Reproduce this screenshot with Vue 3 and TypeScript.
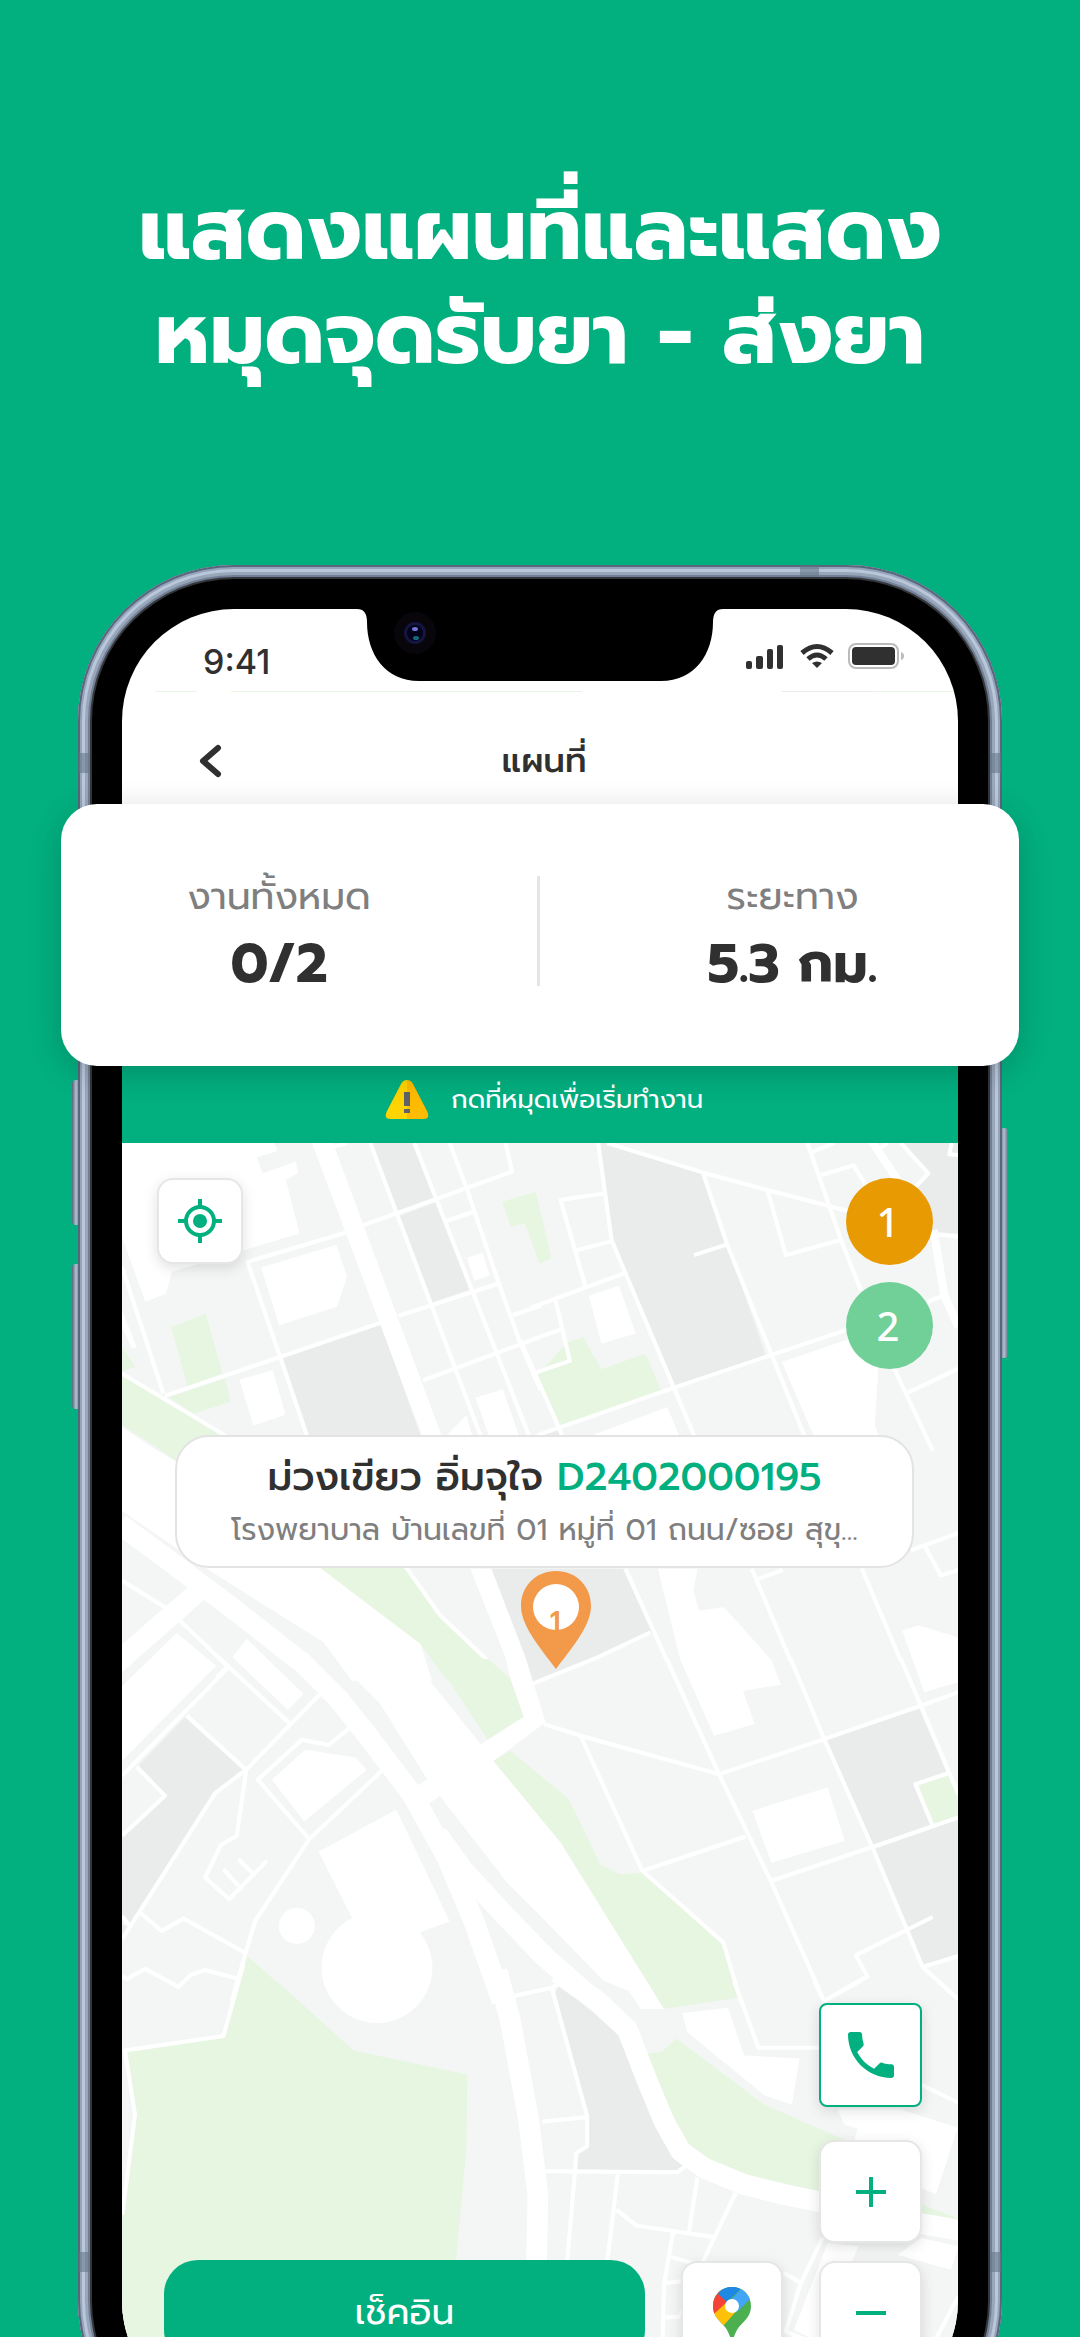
<script setup lang="ts">
interface Tile {
  x: number
  y: number
  dark?: string[]
  green?: string[]
  white?: string[]
  roads?: string[]
  medium?: string[]
  wide?: string[]
}

interface Stat {
  label: string
  value: string
}

const headline: string[] = ['แสดงแผนที่และแสดง', 'หมุดจุดรับยา - ส่งยา']

const stats: Stat[] = [
  { label: 'งานทั้งหมด', value: '0/2' },
  { label: 'ระยะทาง', value: '5.3 กม.' },
]

const stops: number[] = [1, 2]

const tiles: Tile[] = [
  {
    x: 0,
    y: 0,
    dark: [
      '785,39 908,39 970,205 862,245',
      '868,258 980,215 1078,478 965,517',
      '518,682 812,583 930,915 595,915',
    ],
    green: [
      '183,590 287,551 337,730 232,768',
      '175,800 345,745 361,815 250,850',
      '36,735 160,805 330,915 500,1040 300,1065 140,950 36,885',
      '36,650 77,710 36,722',
      '1175,215 1276,185 1323,385 1287,400 1243,280 1200,290',
    ],
    white: [
      '36,39 490,39 503,62 440,82 457,130 557,95 563,130 527,150 568,310 400,360 250,405 185,425 168,490 106,515 36,320',
      '453,412 678,345 710,438 680,530 507,585',
      '388,748 487,720 526,853 430,886',
      '1070,383 1117,368 1138,436 1092,452',
      '1095,802 1177,777 1225,915 1135,915',
      '1010,915 1068,855 1085,915',
      '605,39 668,39 993,915 935,915',
      '36,540 80,650 66,655 36,590',
    ],
    roads: [
      '665,52 710,39',
      '590,915 412,395 705,308',
      '760,285 1205,125 1185,39',
      '165,797 810,578',
      '865,557 1165,460',
      '938,750 1290,620',
      '780,39 1110,915',
      '912,39 1255,915',
      '1018,39 1070,178 1165,460 1230,640 1290,780',
      '1010,272 1090,245',
      '1207,555 1290,527',
      '36,410 160,790',
      '36,730 345,915',
    ],
  },
  {
    x: 1260,
    y: 0,
    dark: [
      '207,39 240,39 518,132 590,345 705,675 432,768 285,430 245,335',
      '1115,39 1282,39 1282,310 1210,305 1150,180 1192,130',
      '20,915 85,895 92,915',
    ],
    green: ['110,637 158,620 212,717 345,670 392,782 90,885 20,735'],
    white: [
      '175,497 265,466 315,610 213,640',
      '185,915 410,830 445,915',
      '753,695 960,625 1042,715 1032,885 1042,915 848,915',
    ],
    roads: [
      '203,39 243,330 285,430 490,915',
      '230,39 518,128 710,180 960,245',
      '518,132 590,345 820,915',
      '490,375 590,343',
      '710,180 765,375 935,328',
      '830,39 930,328 990,480',
      '840,68 910,39',
      '872,135 968,106 1005,165',
      '1045,55 1070,39',
      '1110,39 1192,130 1155,170',
      '1282,75 1255,73 1262,39',
      '0,533 280,430',
      '220,190 90,210 165,470',
      '140,360 245,333',
      '0,630 90,598',
      '75,510 118,692 15,727',
      '-30,630 95,915',
      '20,915 430,772 950,598',
      '1090,715 1205,960',
      '1125,790 1282,715',
      '1190,515 1240,495',
      '1210,312 1282,320',
    ],
    medium: ['1020,30 1100,150', '1208,300 1240,495 1282,590'],
  },
  {
    x: 0,
    y: 870,
    dark: ['1140,445 1537,445 1626,638 1265,790'],
    green: ['600,425 880,430 990,580 1200,780 1010,780 930,670'],
    white: [
      '36,20 140,90 200,125 640,450 930,670 965,780 725,780 640,665 290,445 36,272',
      '36,672 237,497 285,535 36,755',
      '200,637 318,735 36,1020 36,797',
      '410,655 580,820 533,867 367,710',
      '1642,445 1760,445 1748,510 1765,570 1840,560 1985,722 1710,722',
      '2374,630 2423,615 2540,650 2540,785 2440,815',
    ],
    roads: [
      '36,480 165,560',
      '210,600 355,740',
      '350,740 320,770',
      '880,430 990,585 1200,785',
      '1545,445 1670,722',
      '1923,445 2040,722',
      '2253,445 2370,722',
      '1943,475 2016,448',
      '2400,390 2550,335',
      '2440,375 2490,465 2550,445',
    ],
    wide: ['30,312 150,400 350,550 570,722'],
  },
  {
    x: 0,
    y: 1590,
    dark: [
      '225,170 400,330 315,395 60,787 36,765 36,525 165,405 85,315',
      '36,790 55,797 36,820',
    ],
    green: [
      '970,-10 1135,-5 1200,55 1240,168 1132,237',
      '1148,300 1200,270 1375,415 1470,612 1528,640 1595,635 1835,850 1882,1010 1660,1044 1645,1020 1350,545 1260,440',
      '412,885 562,1020 365,1020',
    ],
    white: [
      '485,357 585,267 735,290 770,327 582,481',
      '625,573 858,447 1018,782 930,813 860,900 725,770',
      '680,0 920,0 970,75 1110,250 1148,300 1350,545 1660,1044 1590,1044 1555,990 1480,960 1290,765 1190,665 988,405 950,355 810,130',
      '922,375 1110,252 1240,168 1200,55 1185,-10 1080,-275 1143,-275 1245,-10 1305,185 1150,300 960,425 890,430',
    ],
    roads: [
      '325,-10 540,190',
      '355,20 36,345',
      '630,100 410,325 315,397 36,835',
      '230,165 405,325',
      '80,318 165,405 36,525',
      '36,765 60,795',
      '408,330 380,525 332,553 285,650 357,715 470,600',
      '340,625 385,675',
      '385,595 425,635',
      '720,200 655,253 575,237 443,357 597,535 820,325',
      '597,535 435,780 405,880 365,1020',
      '90,755 155,810 220,773 405,875',
      '36,945 50,955 105,923 205,978 240,943 285,927 380,952',
    ],
    wide: [
      '565,-5 685,115 780,235 905,400 1010,590 1090,780 1175,1020',
      '980,520 1060,630 1180,760 1300,885 1425,995',
    ],
  },
  {
    x: 1260,
    y: 1590,
    dark: [
      '885,237 1165,145 1248,338 1153,370 1200,492 1025,555',
      '1030,565 1282,475 1282,885 1175,915',
    ],
    green: ['1163,372 1252,345 1282,415 1282,468 1208,490'],
    white: [
      '665,450 890,380 942,540 722,606',
      '450,0 722,0 750,72 637,90 671,190 550,225',
    ],
    roads: [
      '5,70 190,-5 360,-85',
      '40,190 150,225 565,340',
      '150,225 335,630 578,845 630,1020',
      '335,630 645,527',
      '408,-5 565,340 720,660 880,1020',
      '565,340 880,235 1170,135 1282,95',
      '780,-5 880,235 1025,560 1175,918 1282,1015',
      '720,660 1025,558 1282,470',
      '1110,-5 1170,135 1282,400',
      '1205,768 975,883 1010,947 880,1020',
      '1175,918 1282,885',
      '1205,495 1153,370 1250,338',
    ],
  },
  {
    x: -150,
    y: 2550,
    green: [
      '538,0 650,0 880,208 1221,280 1218,500 1185,860 1150,1300 185,1300 185,700 228,400 197,212 490,165',
    ],
    roads: [
      '550,-50 490,165 195,208 225,400 187,700',
      '1360,45 1475,20 1500,5',
    ],
    wide: ['1310,-30 1350,120 1405,420 1432,640 1428,860 1400,1250'],
  },
  {
    x: 1260,
    y: 2550,
    dark: [
      '88,10 268,165 410,480 455,555 440,568 140,565 140,515 170,495 165,405 75,35',
    ],
    green: [
      '350,218 393,212 437,172 700,370 945,477 1000,690 860,630 610,570 510,530 470,480 420,400',
      '1170,668 1282,712 1282,720 1170,700',
    ],
    white: [
      '455,97 592,80 640,223 806,232 783,370 700,342 470,153',
      '920,385 1110,385 1280,440 1215,638 1170,620 970,480 980,442 940,430',
      '1100,820 1170,770 1282,795 1260,865',
      '890,785 983,795 860,1080 790,1045',
    ],
    roads: [
      '65,25 170,405 170,495 138,515 110,840 95,1250',
      '35,422 165,408',
      '45,570 440,573 470,550',
      '262,575 228,860 200,1250',
      '500,590 475,750',
      '257,685 318,733 548,767',
      '615,635 510,855 450,1000',
      '427,755 400,910 392,1250',
      '415,825 520,855',
      '405,905 450,900',
      '405,1008 450,1005',
      '875,770 810,905 765,1050 860,1090',
      '760,875 810,905',
      '1200,1100 1282,945',
      '610,0 683,200 870,200',
      '850,0 880,60 1000,-10',
      '1220,0 1282,55',
      '1170,310 1282,365',
    ],
    wide: ['80,-25 200,60 290,145 350,300 400,420 450,510 520,560 640,610 760,640 870,662', '1160,725 1290,748'],
  },
]

const area = (shapes?: string[]): string => (shapes ?? []).map((s) => `M${s}Z`).join('')
const line = (shapes?: string[]): string => (shapes ?? []).map((s) => `M${s}`).join('')
</script>

<template>
  <main class="page">
    <h1 class="headline">
      <span v-for="row in headline" :key="row">{{ row }}</span>
    </h1>

    <section class="phone">
      <i class="key key-up"></i>
      <i class="key key-down"></i>
      <i class="key key-power"></i>
      <div class="bezel">
        <i class="band band-top"></i>
        <i class="band band-left"></i>
        <i class="band band-right"></i>
        <i class="band band-left low"></i>
        <i class="band band-right low"></i>
        <div class="screen">
          <svg class="notch" viewBox="0 0 366 106" aria-hidden="true">
            <path d="M0 0H366V33Q356 33 356 46C356 78 338 105 304 105H62C28 105 10 78 10 46Q10 33 0 33Z" />
            <rect class="speaker-well" x="106" y="-10" width="154" height="31" rx="9" />
            <rect class="speaker" x="110" y="6" width="146" height="11" rx="5" />
            <circle class="lens-ring" cx="58" cy="57" r="21" />
            <circle class="lens" cx="58" cy="57" r="11" />
            <circle class="lens-core" cx="58" cy="57" r="8" />
            <ellipse class="glint" cx="58" cy="53" rx="3" ry="2" />
            <ellipse class="glint-low" cx="59" cy="62" rx="3" ry="2" />
          </svg>

          <div class="status">
            <time>9:41</time>
            <svg class="status-icons" viewBox="0 0 160 28" aria-hidden="true">
              <rect x="0" y="18" width="6" height="8" rx="2" />
              <rect x="10" y="13" width="7" height="13" rx="2" />
              <rect x="21" y="6" width="6" height="20" rx="2" />
              <rect x="31" y="2" width="6" height="24" rx="2" />
              <g class="arcs">
                <path d="M56 10Q71 -3 86 10" />
                <path d="M62 16Q71 8 80 16" />
              </g>
              <path d="M66 20Q71 17 76 20L71 25Z" />
              <rect class="shell" x="103" y="1" width="49" height="24" rx="7" />
              <rect x="106" y="4" width="43" height="18" rx="4" />
              <path class="nub" d="M155 9Q158 10 158 13Q158 16 155 17Z" />
            </svg>
          </div>
          <div class="hairline"></div>

          <header class="bar">
            <button class="back" type="button" aria-label="ย้อนกลับ">
              <svg viewBox="0 0 24 36"><path d="M20 5L5 18L20 31" /></svg>
            </button>
            <h2>แผนที่</h2>
          </header>

          <p class="hint">
            <svg viewBox="0 0 44 40" aria-hidden="true">
              <path class="sign-left" d="M22 0Q18 0 16 4L2 31Q-2 39 6 39H22Z" />
              <path class="sign-right" d="M22 0Q26 0 28 4L42 31Q46 39 38 39H22Z" />
              <path class="mark" d="M19 12H25V26H19ZM19 29H25V33H19Z" />
            </svg>
            <span>กดที่หมุดเพื่อเริ่มทำงาน</span>
          </p>

          <div class="map">
            <svg class="streets" viewBox="36 39 2505 3813" preserveAspectRatio="xMidYMin slice" aria-hidden="true">
              <g v-for="(t, i) in tiles" :key="i" :transform="`translate(${t.x} ${t.y})`">
                <path class="dark" :d="area(t.dark)" />
                <path class="green" :d="area(t.green)" />
                <path class="white" :d="area(t.white)" />
                <path class="road" :d="line(t.roads)" />
                <path class="road medium" :d="line(t.medium)" />
                <path class="road wide" :d="line(t.wide)" />
              </g>
              <circle class="white" cx="560" cy="2385" r="54" />
              <circle class="white" cx="800" cy="2510" r="166" />
            </svg>

            <div class="tools">
              <button class="tile locate" type="button" aria-label="ตำแหน่งของฉัน">
                <svg viewBox="0 0 44 44">
                  <circle cx="22" cy="22" r="14" />
                  <circle class="dot" cx="22" cy="22" r="7" />
                  <path d="M22 0V8M22 36V44M0 22H8M36 22H44" />
                </svg>
              </button>
              <div class="stops">
                <button v-for="n in stops" :key="n" type="button" class="stop" :class="{ current: n === 1 }">{{ n }}</button>
              </div>
            </div>

            <article class="place">
              <p class="who">ม่วงเขียว อิ่มจุใจ <a href="#job">D2402000195</a></p>
              <p class="where">โรงพยาบาล บ้านเลขที่ 01 หมู่ที่ 01 ถนน/ซอย สุขุ...</p>
            </article>
            <svg class="pin" viewBox="0 0 70 98">
              <path d="M35 0C15 0 0 15 0 35C0 55 20 78 35 98C50 78 70 55 70 35C70 15 55 0 35 0Z" />
              <circle cx="35" cy="36" r="23" />
              <text x="34" y="61">1</text>
            </svg>

            <div class="actions">
              <button class="checkin" type="button">เช็คอิน</button>
              <button class="tile maps" type="button" aria-label="Google Maps">
                <svg viewBox="0 0 38 52">
                  <clipPath id="drop"><path d="M19 0C8 0 0 8 0 19C0 29 6 33 12 40C16 45 17 52 19 52C21 52 22 45 26 40C32 33 38 29 38 19C38 8 30 0 19 0Z" /></clipPath>
                  <g clip-path="url(#drop)">
                    <path fill="#4caf50" d="M0 0H38V52H0Z" />
                    <path fill="#ffc107" d="M-4 30L12 13L27 20L11 38L-4 50Z" />
                    <path fill="#f44336" d="M-2 0L8 4L15 14L2 26L-4 30Z" />
                    <path fill="#1e88e5" d="M5 7L14 -4H34L14 15Z" />
                    <path fill="#42a5f5" d="M28 2L40 8L36 13L24 25L14 17Z" />
                  </g>
                  <circle cx="19" cy="19" r="7" fill="#fff" />
                </svg>
              </button>
              <div class="zoom">
                <button class="tile call" type="button" aria-label="โทร">
                  <svg viewBox="3 3 18 18"><path d="M6.6 10.8c1.4 2.800 3.800 5.100 6.600 6.600l2.200-2.200c.3-.3.700-.4 1-.2 1.100.4 2.300.6 3.600.6.500 0 1 .4 1 1V20c0 .5-.5 1-1 1C10.600 21 3 13.400 3 4c0-.5.5-1 1-1h3.500c.6 0 1 .5 1 1 0 1.200.2 2.400.6 3.600.1.300 0 .7-.2 1z" /></svg>
                </button>
                <button class="tile" type="button" aria-label="ซูมเข้า">
                  <svg viewBox="0 0 30 30"><path d="M0 15H30M15 0V30" /></svg>
                </button>
                <button class="tile" type="button" aria-label="ซูมออก">
                  <svg viewBox="0 0 30 30"><path d="M0 15H30" /></svg>
                </button>
              </div>
            </div>
          </div>
        </div>
      </div>

      <dl class="summary">
        <div v-for="s in stats" :key="s.label" class="stat">
          <dt>{{ s.label }}</dt>
          <dd>{{ s.value }}</dd>
        </div>
      </dl>
    </section>
  </main>
</template>

<style>
body {
  background: #02af7f;
}
</style>

<style scoped>
* {
  box-sizing: border-box;
}

.page {
  display: flex;
  flex-direction: column;
  height: 100vh;
  overflow: hidden;
  background: #02af7f;
  color: #303030;
  font-family: Prompt, Kanit, 'Noto Sans Thai', 'Noto Sans', 'Open Sans', sans-serif;
}

h1,
h2,
p,
dl,
dd {
  margin: 0;
}

button {
  padding: 0;
  border: 0;
  font-family: inherit;
}

svg {
  display: block;
}

.headline {
  flex: none;
  padding-top: 178px;
  color: #fff;
  font-size: 86px;
  font-weight: 700;
  line-height: 104px;
  text-align: center;
}

.headline span {
  display: block;
  white-space: nowrap;
}

.phone {
  position: relative;
  flex: 1;
  display: flex;
  min-height: 0;
  margin: 179px 78px -120px;
}

.bezel {
  position: relative;
  flex: 1;
  display: flex;
  padding: 44px;
  border-radius: 156px;
  background: #000;
  box-shadow:
    inset 0 0 0 2px #59677d,
    inset 0 0 0 4px #95a4ba,
    inset 0 0 0 7px #bac7da,
    inset 0 0 0 10px #98a6ba,
    inset 0 0 0 12px #718096,
    inset 0 0 0 14px #35363a;
}

.band {
  position: absolute;
  background: #66788c99;
}

.band-top {
  top: 1px;
  right: 183px;
  width: 19px;
  height: 11px;
}

.band-left,
.band-right {
  top: 188px;
  width: 11px;
  height: 20px;
}

.band-left {
  left: 1px;
}

.band-right {
  right: 1px;
}

.low {
  top: auto;
  bottom: 185px;
}

.key {
  position: absolute;
  left: -6px;
  width: 8px;
  height: 145px;
  border-radius: 4px 0 0 4px;
  background: linear-gradient(90deg, #56647a, #b3c0d3 50%, #65738a);
}

.key-up {
  top: 515px;
}

.key-down {
  top: 699px;
}

.key-power {
  top: 563px;
  right: -6px;
  left: auto;
  height: 230px;
  border-radius: 0 4px 4px 0;
}

.screen {
  position: relative;
  flex: 1;
  display: flex;
  flex-direction: column;
  min-width: 0;
  overflow: hidden;
  border-radius: 112px;
  background: #fff;
}

.notch {
  position: absolute;
  top: -33px;
  left: 50%;
  width: 366px;
  height: 106px;
  margin-left: -183px;
  overflow: visible;
}

.speaker-well {
  fill: #111;
}

.speaker {
  fill: #1d1d1f;
  stroke: #3a3a3c;
}

.lens-ring {
  fill: #08060a;
}

.lens {
  fill: #141540;
}

.lens-core {
  fill: #03031c;
}

.glint {
  fill: #7073d8;
}

.glint-low {
  fill: #176b79;
}

.status {
  display: flex;
  align-items: center;
  justify-content: space-between;
  height: 82px;
  padding: 14px 52px 0 81px;
  font-family: Inter, sans-serif;
}

.status time {
  padding-top: 10px;
  font-size: 34px;
  font-weight: 500;
  line-height: 40px;
}

.status-icons {
  width: 160px;
  height: 28px;
  fill: #303030;
}

.arcs {
  fill: none;
  stroke: #303030;
  stroke-width: 5;
}

.shell {
  fill: none;
  stroke: #bbb;
  stroke-width: 2;
}

.nub {
  fill: #bbb;
}

.hairline {
  flex: none;
  height: 1px;
  background: linear-gradient(90deg, #fff 4%, #e7f6e1 4% 9%, #fff 9% 13%, #e7f6e1 13% 55%, #fff 55% 79%, #eaeceb 79% 90%, #e7f6e1 90%);
}

.bar {
  position: relative;
  display: flex;
  flex: none;
  align-items: center;
  justify-content: center;
  height: 138px;
  padding-left: 8px;
}

.bar h2 {
  font-size: 34px;
  font-weight: 500;
  line-height: 48px;
}

.back {
  position: absolute;
  left: 76px;
  top: 51px;
  background: none;
}

.back svg {
  width: 24px;
  height: 36px;
  fill: none;
  stroke: #303030;
  stroke-width: 6;
  stroke-linecap: round;
  stroke-linejoin: round;
}

.hint {
  display: flex;
  flex: none;
  align-items: center;
  justify-content: center;
  gap: 22px;
  height: 313px;
  padding: 226px 0 0 8px;
  background: #02af7f;
  color: #fff;
  font-size: 26px;
  line-height: 40px;
}

.hint svg {
  width: 44px;
  height: 40px;
}

.sign-left {
  fill: #ffd400;
}

.sign-right {
  fill: #fb0;
}

.mark {
  fill: #5f6368;
}

.summary {
  position: absolute;
  top: 239px;
  right: -17px;
  left: -17px;
  display: flex;
  align-items: center;
  height: 262px;
  padding-bottom: 8px;
  border-radius: 36px;
  background: #fff;
  box-shadow: 0 8px 32px #0000002e;
}

.stat {
  width: 50%;
  height: 110px;
  text-align: center;
}

.stat:first-child {
  padding-right: 40px;
  border-right: 3px solid #e5e5e5;
}

.stat:last-child {
  padding-left: 26px;
}

.stat dt {
  color: #7f7f7f;
  font-size: 38px;
  line-height: 42px;
}

.stat dd {
  font-size: 54px;
  font-weight: 700;
  line-height: 92px;
}

.map {
  position: relative;
  display: flex;
  flex: 1;
  flex-direction: column;
  align-items: center;
  min-height: 0;
  background: #f4f6f6;
}

.streets {
  position: absolute;
  inset: 0;
  width: 100%;
  height: 100%;
}

.dark {
  fill: #eaeceb;
}

.green {
  fill: #e7f6e1;
}

.white {
  fill: #fff;
}

.road {
  fill: none;
  stroke: #fff;
  stroke-width: 12;
  stroke-linejoin: round;
}

.medium {
  stroke-width: 24;
}

.wide {
  stroke-width: 62;
}

.tools {
  position: relative;
  display: flex;
  align-items: flex-start;
  justify-content: space-between;
  align-self: stretch;
  height: 292px;
  padding: 35px 25px 0 35px;
}

.tile {
  display: flex;
  align-items: center;
  justify-content: center;
  width: 103px;
  height: 103px;
  border: 2px solid #e6e6e6;
  border-radius: 16px;
  background: #fff;
  box-shadow: 0 4px 14px #0000001f;
}

.tile svg {
  width: 30px;
  height: 30px;
  fill: none;
  stroke: #02af7f;
  stroke-width: 4;
}

.locate {
  width: 86px;
  height: 86px;
}

.locate svg {
  width: 44px;
  height: 44px;
}

.locate .dot {
  fill: #02af7f;
  stroke: none;
}

.stops {
  display: flex;
  flex-direction: column;
  gap: 17px;
}

.stop {
  width: 87px;
  height: 87px;
  padding-right: 3px;
  border-radius: 50%;
  background: #70d098;
  color: #fff;
  font-family: 'Noto Sans', sans-serif;
  font-size: 40px;
  font-weight: 500;
}

.stop.current {
  background: #e89a02;
}

.place {
  position: relative;
  align-self: stretch;
  height: 133px;
  margin: 0 44px 0 53px;
  padding-top: 12px;
  border: 2px solid #e3e3e3;
  border-radius: 34px;
  background: #fff;
  text-align: center;
  white-space: nowrap;
}

.who {
  font-size: 39px;
  font-weight: 500;
  line-height: 56px;
}

.who a {
  color: #02af7f;
  text-decoration: none;
}

.where {
  color: #7f7f7f;
  font-size: 30px;
  line-height: 50px;
}

.pin {
  position: relative;
  flex: none;
  width: 70px;
  height: 98px;
  margin: 3px 0 0 31px;
  fill: #f2994a;
}

.pin circle {
  fill: #fff;
}

.pin text {
  font-size: 30px;
  font-weight: 500;
  text-anchor: middle;
}

.actions {
  position: relative;
  display: flex;
  flex: 1;
  align-items: flex-end;
  align-self: stretch;
  gap: 36px;
  padding: 0 36px 49px 42px;
}

.checkin {
  flex: 1;
  height: 104px;
  border-radius: 34px;
  background: #02af7f;
  color: #fff;
  font-size: 36px;
  line-height: 56px;
}

.maps {
  width: 102px;
}

.maps svg {
  width: 38px;
  height: 52px;
  stroke: none;
}

.zoom {
  display: flex;
  flex-direction: column;
  gap: 18px;
}

.call {
  height: 104px;
  margin-bottom: 15px;
  border-color: #02af7f;
  border-radius: 8px;
}

.call svg {
  width: 46px;
  height: 46px;
  fill: #02af7f;
  stroke: none;
}
</style>
